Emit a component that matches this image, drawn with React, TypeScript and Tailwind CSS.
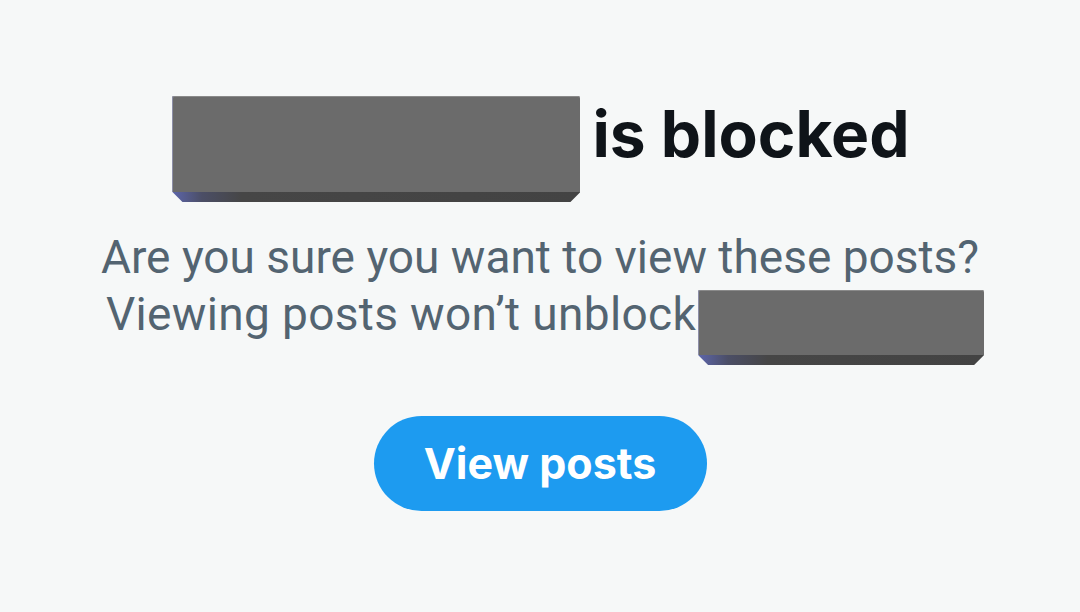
const Redacted = ({ w, h, className = "" }: { w: number; h: number; className?: string }) => (
  <span
    className={`inline-flex flex-col align-top ${className}`}
    style={{ width: w, height: h }}
  >
    <span className="flex-1 rounded-t-[2px] bg-[#6b6b6b] shadow-[inset_1px_0_0_#8d8fa8,inset_0_1px_0_#8a8a8a]" />
    <span className="h-[10px] bg-[linear-gradient(90deg,#5d66ab_0px,#4b4e66_30px,#464646_70px,#434343_100%)] [clip-path:polygon(0_0,100%_0,calc(100%-10px)_100%,10px_100%)]" />
  </span>
);

export default function App() {
  return (
    <div className="flex h-[612px] w-[1080px] flex-col items-center bg-[#f6f8f8] pt-[96px]">
      <div className="ml-[2px] flex items-start gap-[12px]">
        <Redacted w={408} h={106} />
        <h1 className="font-['Inter',sans-serif] text-[64px] font-bold leading-[1.2] text-[#0f1419]">
          is blocked
        </h1>
      </div>
      <p className="mt-[27px] text-center font-['Roboto',sans-serif] text-[46px] leading-[57px] text-[#536471]">
        Are you sure you want to view these posts?
        <br />
        <span className="ml-[10px] tracking-[0.35px]">Viewing posts won’t unblock</span>
        <Redacted w={286} h={75} className="ml-[2px] mt-[4px]" />
      </p>
      <button className="mt-[51px] flex h-[95px] w-[333px] items-center justify-center rounded-full bg-[#1d9bf0] font-['Inter',sans-serif] text-[43px] font-bold text-white">
        View posts
      </button>
    </div>
  );
}
